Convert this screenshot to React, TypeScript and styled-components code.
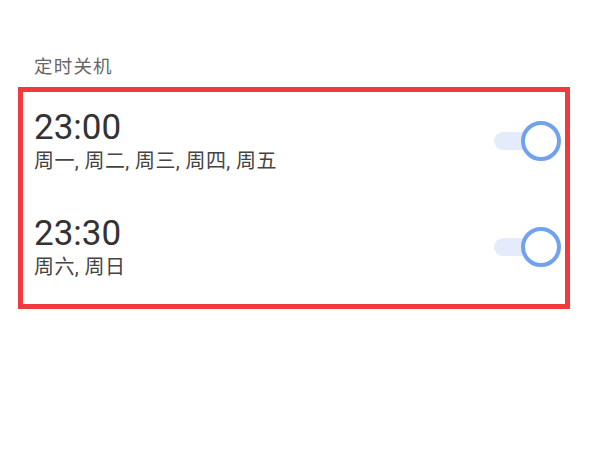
import styled, { createGlobalStyle } from 'styled-components';

const GlobalStyle = createGlobalStyle`
  html,
  body {
    margin: 0;
    padding: 0;
    background: #ffffff;
  }

  body {
    font-family: Roboto, "Noto Sans CJK SC", sans-serif;
    -webkit-font-smoothing: antialiased;
  }
`;

const Page = styled.div`
  width: 600px;
  height: 455px;
  padding: 55px 30px 0 18px;
  box-sizing: border-box;
`;

const SectionTitle = styled.h3`
  margin: 0 0 8px 16px;
  font-size: 18.5px;
  line-height: 24px;
  font-weight: 400;
  letter-spacing: 1.2px;
  color: #666666;
`;

const List = styled.ul`
  list-style: none;
  margin: 0;
  padding: 0;
  width: 552px;
  border: 5px solid #f03a3d;
  box-sizing: border-box;
`;

const Row = styled.li`
  display: flex;
  align-items: center;
  justify-content: space-between;
  padding: 16px 4px 24px 11px;
`;

const Info = styled.div`
  display: flex;
  flex-direction: column;
`;

const Time = styled.span`
  font-size: 35px;
  line-height: 40px;
  color: #333333;
`;

const Days = styled.span`
  margin-top: 1px;
  font-size: 20px;
  line-height: 25px;
  letter-spacing: 0.4px;
  color: #444444;
`;

const Switch = styled.button<{ $on: boolean }>`
  position: relative;
  width: 67px;
  height: 40px;
  padding: 0;
  border: none;
  background: transparent;
  cursor: pointer;

  &::before {
    content: '';
    position: absolute;
    left: 0;
    right: 14px;
    top: 11px;
    height: 18px;
    border-radius: 9px;
    background: ${({ $on }) => ($on ? '#e4ecfb' : '#e6e6e6')};
  }

  &::after {
    content: '';
    position: absolute;
    top: 0;
    ${({ $on }) => ($on ? 'right: 0;' : 'left: 0;')}
    width: 40px;
    height: 40px;
    border-radius: 50%;
    box-sizing: border-box;
    border: 4px solid ${({ $on }) => ($on ? '#72a2ec' : '#cccccc')};
    background: #ffffff;
  }
`;

interface Schedule {
  time: string;
  days: string;
  on: boolean;
}

const schedules: Schedule[] = [
  { time: '23:00', days: '周一, 周二, 周三, 周四, 周五', on: true },
  { time: '23:30', days: '周六, 周日', on: true },
];

export default function App() {
  return (
    <>
      <GlobalStyle />
      <Page>
        <SectionTitle>定时关机</SectionTitle>
        <List>
          {schedules.map((s) => (
            <Row key={s.time}>
              <Info>
                <Time>{s.time}</Time>
                <Days>{s.days}</Days>
              </Info>
              <Switch $on={s.on} aria-label={s.time} />
            </Row>
          ))}
        </List>
      </Page>
    </>
  );
}
